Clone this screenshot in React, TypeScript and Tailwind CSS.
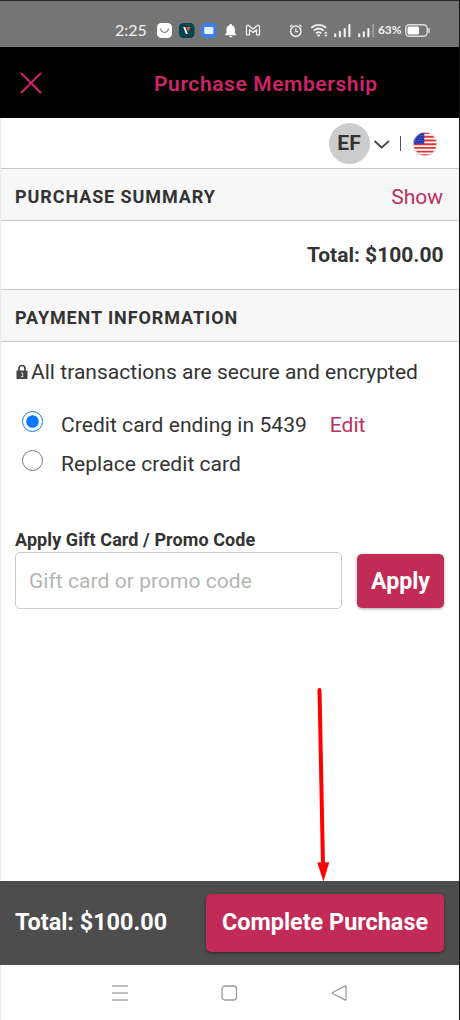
import { useState } from "react";

const cards = [
  { id: "current", label: "Credit card ending in 5439", editable: true },
  { id: "replace", label: "Replace credit card", editable: false },
];

function StatusBar() {
  return (
    <div className="flex h-[46px] shrink-0 items-center bg-[#757575] pt-3 pl-[115px] text-[#f2f2f2]">
      <span className="w-[41px] font-['Lato'] text-[16px] leading-5 whitespace-nowrap">
        2:25
      </span>
      <svg width="108" height="18" viewBox="156 21 108 18" fill="none">
        <rect x="157" y="23" width="15" height="15" rx="4.5" fill="#fff" />
        <path d="M160.500 28.500c1 5.200 7 5.200 8 0" stroke="#777" strokeWidth="1.200" />
        <rect x="179" y="23" width="15.500" height="15" rx="4.500" fill="#06454d" />
        <path d="M183.200 27h2l2.600 7h-1.800z" fill="#fff" />
        <path d="M186.300 27h4.200l-2.200 4.800z" fill="#ee5b35" />
        <rect x="201" y="23" width="15.500" height="15" rx="4.500" fill="#3c7fee" />
        <rect x="204.300" y="27" width="9" height="7" rx="0.700" fill="#eff9fd" />
        <path d="m204.600 27.400 4.200 3 4.200-3" stroke="#b3d6f3" strokeWidth="0.900" />
        <path
          d="M230.700 24c.9 0 1.200.5 1.200 1.200 2.200.6 3 2.300 3 4.300v3.500l1.300 1.400v.8h-11v-.8l1.300-1.400v-3.500c0-2 .8-3.700 3-4.300 0-.7.3-1.200 1.200-1.200zM229.200 35.900h3c-.2 1-.8 1.300-1.500 1.300s-1.300-.3-1.500-1.300z"
          fill="#fff"
        />
        <path
          d="M246.500 26.500v8.300h3v-5l3.500 2.700 3.500-2.700v5h3v-8.300c0-1.300-1.300-1.700-2.100-1L253 29l-4.400-3.500c-.8-.7-2.100-.3-2.100 1z"
          stroke="#f2f2f2"
          strokeWidth="1.300"
          strokeLinejoin="round"
        />
      </svg>
      <svg className="ml-[22px]" width="90" height="18" viewBox="286 21 90 18" fill="none">
        <circle cx="295.800" cy="31.200" r="5.200" stroke="#eee" strokeWidth="1.500" />
        <path d="M295.800 28.400v3.200h2.300M290 26.700l2.300-2M301.600 26.700l-2.300-2" stroke="#eee" strokeWidth="1.300" />
        <path
          d="M311.200 27.700c4.500-3.800 10.500-3.800 15 0M313.700 30.600c3.200-2.600 7-2.600 10 0M316 33.200c1.700-1.300 3.600-1.300 5.200 0"
          stroke="#eee"
          strokeWidth="1.800"
        />
        <path d="m318.600 37-1.900-2.200c1.100-.9 2.700-.9 3.800 0z" fill="#eee" />
        <path d="m323.900 33.400 1.900-2 1.900 2zM323.900 34.800l1.900 2 1.900-2z" fill="#eee" />
        <path
          d="M335.200 36.200v-2M339.900 36.200v-4.500M344.700 36.200v-7.200M349.400 36.200V25M359.200 36.200v-2M363.800 36.200v-4M368.400 36.200V29"
          stroke="#f2f2f2"
          strokeWidth="2.100"
          strokeLinecap="round"
        />
        <path d="M373.200 37V24" stroke="#a3a3a3" strokeWidth="1.800" />
      </svg>
      <span className="ml-[2px] w-[26px] font-['Lato'] text-[12px] leading-5 font-bold tracking-[-0.1px] whitespace-nowrap">
        63%
      </span>
      <svg width="27" height="15" viewBox="404 23 27 15" fill="none">
        <rect x="405.700" y="24.700" width="21.500" height="11.600" rx="3.500" stroke="#ddd" strokeWidth="1.400" />
        <rect x="407.500" y="26.500" width="11.500" height="8" rx="1.500" fill="#fff" />
        <path d="M429 28.700v3.600" stroke="#ddd" strokeWidth="1.600" strokeLinecap="round" />
      </svg>
    </div>
  );
}

function Flag() {
  return (
    <svg width="26" height="26" viewBox="0 0 26 26">
      <defs>
        <clipPath id="flag">
          <circle cx="13" cy="13" r="11.800" />
        </clipPath>
      </defs>
      <g clipPath="url(#flag)">
        <rect width="26" height="26" fill="#fff" />
        <path
          d="M0 2.100h26M0 5.800h26M0 9.500h26M0 13.200h26M0 16.900h26M0 20.600h26M0 24.100h26"
          stroke="#e0332f"
          strokeWidth="1.900"
        />
        <rect width="12.300" height="13" fill="#2937a8" />
        <path
          d="M3 4.500h9M2 7h10M3 9.500h9M2 12h10"
          stroke="#7580cc"
          strokeWidth="0.800"
          strokeDasharray="1 1.400"
        />
      </g>
      <circle cx="13" cy="13" r="11.800" fill="none" stroke="#dedede" strokeWidth="0.800" />
    </svg>
  );
}

function Lock() {
  return (
    <svg className="mr-[3px] ml-px" width="12" height="16" viewBox="0 0 12 16">
      <path d="M3 7V4.500a3 3 0 0 1 6 0V7" fill="none" stroke="#444" strokeWidth="1.700" />
      <rect x="0.500" y="6.500" width="11" height="8.500" rx="0.800" fill="#444" />
      <path d="M5 9h1.700v3.500M4.800 12.700h2.600" stroke="#ddd" strokeWidth="1" fill="none" />
    </svg>
  );
}

export default function App() {
  const [card, setCard] = useState("current");
  const [code, setCode] = useState("");

  return (
    <div className="relative flex h-[1020px] w-[460px] flex-col overflow-hidden border-t border-r border-t-[#29262b] border-r-[#151515] bg-white font-[Roboto,sans-serif] text-[#333]">
      <StatusBar />
      <header className="flex h-[71px] shrink-0 items-center bg-black pl-5 text-[#cf2468]">
        <button aria-label="Close">
          <svg width="22" height="22" viewBox="0 0 22 22" stroke="currentColor" strokeWidth="2" strokeLinecap="round">
            <path d="m1.500 1.500 19 19M20.500 1.500l-19 19" />
          </svg>
        </button>
        <h1 className="ml-[112px] pt-0.5 text-[21px] leading-6 font-semibold tracking-[0.6px] whitespace-nowrap">
          Purchase Membership
        </h1>
      </header>

      <main className="flex min-h-0 flex-1 flex-col border-l border-[#ececec]">
        <div className="flex h-[50px] shrink-0 items-center justify-end pt-px pr-[21px]">
          <div className="flex size-[41px] items-center justify-center rounded-full bg-[#ccc] pt-px text-[21px] font-bold">
            EF
          </div>
          <svg className="mt-0.5 ml-[3px]" width="18" height="11" viewBox="0 0 18 11" fill="none">
            <path d="m1.500 2 7.200 6.500L16 2" stroke="#444" strokeWidth="1.800" />
          </svg>
          <div className="mr-[11px] ml-[9px] h-[15px] w-[1.5px] bg-[#555]" />
          <Flag />
        </div>

        <section className="flex h-[53px] shrink-0 items-center justify-between border-y border-[#c8c8c8] bg-[#f7f7f7] pt-1 pr-4 pl-3.5">
          <h2 className="text-[18px] font-bold tracking-[0.9px]">PURCHASE SUMMARY</h2>
          <button className="pt-0.5 text-[21px] text-[#b8325f]">Show</button>
        </section>
        <div className="flex h-[68px] shrink-0 items-center justify-end pt-0.5 pr-[15.5px] text-[21px] font-bold">
          Total: $100.00
        </div>
        <section className="flex h-[53px] shrink-0 items-center border-y border-[#c8c8c8] bg-[#f7f7f7] pt-1 pl-3.5">
          <h2 className="text-[18px] font-bold tracking-[0.9px]">PAYMENT INFORMATION</h2>
        </section>

        <div className="flex flex-col pt-4 pr-[15px] pl-3.5 text-[21px] leading-7">
          <p className="flex items-center tracking-[0.03px] whitespace-nowrap">
            <Lock />
            All transactions are secure and encrypted
          </p>
          <div className="mt-[25px] flex flex-col gap-[11px]">
            {cards.map((item) => (
              <label key={item.id} className="flex items-start pl-[6.5px]">
                <input
                  type="radio"
                  name="card"
                  className="size-[21px] shrink-0 accent-[#0878fa]"
                  checked={card === item.id}
                  onChange={() => setCard(item.id)}
                />
                <span className="ml-[18.5px] tracking-[0.05px]">{item.label}</span>
                {item.editable && <button className="ml-[23px] text-[#b8325f]">Edit</button>}
              </label>
            ))}
          </div>

          <label htmlFor="promo" className="mt-[49px] text-[18px] leading-[25px] font-bold tracking-[0.08px]">
            Apply Gift Card / Promo Code
          </label>
          <div className="flex items-center justify-between">
            <input
              id="promo"
              className="h-[57px] w-[327px] rounded-[5px] border-[1.5px] border-[#ccc] px-[13px] pt-px tracking-[0.05px] outline-none placeholder:text-[#b5b5b5]"
              placeholder="Gift card or promo code"
              value={code}
              onChange={(e) => setCode(e.target.value)}
            />
            <button className="h-[54px] w-[87px] rounded-[5px] bg-[#c12b56] text-[23.2px] font-bold text-white shadow-[0_1px_3px_rgba(0,0,0,0.35)]">
              Apply
            </button>
          </div>
        </div>
      </main>

      <footer className="flex h-[84px] shrink-0 items-center justify-between bg-[#4d4d4d] px-[15px] text-[23.4px] font-bold whitespace-nowrap text-white">
        <span>Total: $100.00</span>
        <button className="h-[58px] w-[238px] rounded-[5px] bg-[#c12b56] shadow-[0_1px_3px_rgba(0,0,0,0.5)]">
          Complete Purchase
        </button>
      </footer>

      <nav className="flex h-[55px] shrink-0 items-center border-l border-[#ececec] pl-[110px] text-[#aaa]">
        <svg width="18" height="18" viewBox="0 0 18 18" stroke="currentColor" strokeWidth="1.500">
          <path d="M1 2h16M1 9h16M1 16h16" />
        </svg>
        <svg className="ml-[91px]" width="18" height="18" viewBox="0 0 18 18" fill="none" stroke="#999" strokeWidth="1.300">
          <rect x="2" y="2" width="14.500" height="14" rx="3" />
        </svg>
        <svg className="ml-[92px]" width="18" height="18" viewBox="0 0 18 18" fill="none" stroke="#999" strokeWidth="1.300">
          <path d="M16 2.200v13.600q0 .5-.6.300L2.600 9.500q-.8-.5 0-1L15.400 1.900q.6-.2.600.3z" />
        </svg>
      </nav>

      <svg
        className="pointer-events-none absolute top-[686px] left-[312px]"
        width="24"
        height="196"
        viewBox="312 687 24 196"
      >
        <path d="m319.500 690 3.500 176" stroke="#f00" strokeWidth="4" strokeLinecap="round" />
        <path d="m317.300 862.500 11.900-.3-5.700 19.300z" fill="#f00" />
      </svg>
    </div>
  );
}
